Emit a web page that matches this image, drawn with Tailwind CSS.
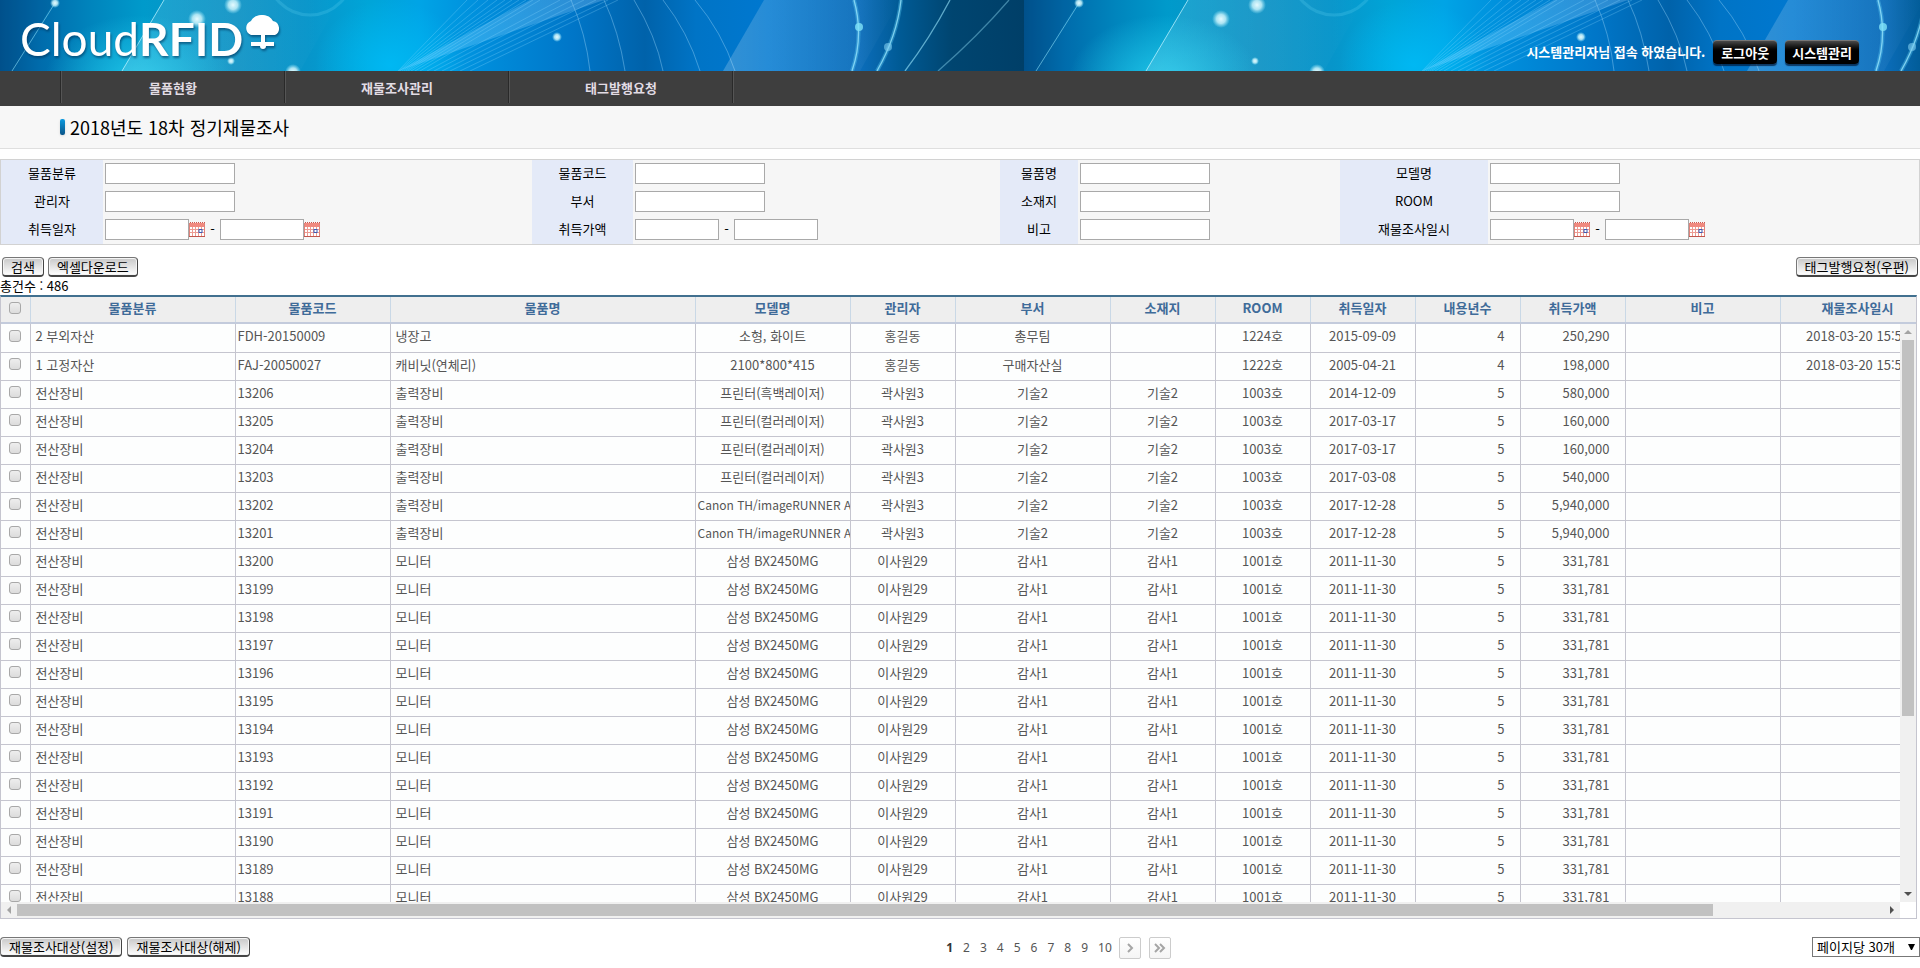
<!DOCTYPE html>
<html lang="ko">
<head>
  <meta charset="UTF-8">
  <meta name="viewport" content="width=device-width, initial-scale=1.0">
  <title>CloudRFID - 정기재물조사</title>
  <script src="https://cdn.jsdelivr.net/npm/@tailwindcss/browser@4"></script>
</head>
<body class="bg-white font-['Noto_Sans_CJK_KR',sans-serif] text-[13px] leading-[18px] text-black overflow-x-hidden">

  <!-- Header -->
  <header class="relative h-[71px] overflow-hidden bg-[#0078c8]">
    <svg class="absolute inset-0 w-full h-full" aria-hidden="true">
      <defs>
        <linearGradient id="sky" x1="0" x2="1">
          <stop offset="0" stop-color="#00538f"/>
          <stop offset="0.04" stop-color="#006cac"/>
          <stop offset="0.09" stop-color="#0085bd"/>
          <stop offset="0.14" stop-color="#009acb"/>
          <stop offset="0.23" stop-color="#0f93c5"/>
          <stop offset="0.3" stop-color="#0795ca"/>
          <stop offset="0.36" stop-color="#00a5d8"/>
          <stop offset="0.41" stop-color="#00a4e6"/>
          <stop offset="0.47" stop-color="#008edc"/>
          <stop offset="0.56" stop-color="#0076c8"/>
          <stop offset="0.63" stop-color="#0062aa"/>
          <stop offset="0.68" stop-color="#0074c6"/>
          <stop offset="0.75" stop-color="#0078d0"/>
          <stop offset="0.84" stop-color="#0b6dba"/>
          <stop offset="0.88" stop-color="#005a94"/>
          <stop offset="0.93" stop-color="#004570"/>
          <stop offset="1" stop-color="#003f68"/>
        </linearGradient>
        <radialGradient id="glow">
          <stop offset="0" stop-color="#22c8ea" stop-opacity="0.9"/>
          <stop offset="1" stop-color="#22c8ea" stop-opacity="0"/>
        </radialGradient>
        <radialGradient id="glowBlue">
          <stop offset="0" stop-color="#00baf5" stop-opacity="0.9"/>
          <stop offset="1" stop-color="#00baf5" stop-opacity="0"/>
        </radialGradient>
        <radialGradient id="dot">
          <stop offset="0" stop-color="#e6fbff"/>
          <stop offset="0.5" stop-color="#c6f1fa" stop-opacity="0.85"/>
          <stop offset="1" stop-color="#9be6f8" stop-opacity="0"/>
        </radialGradient>
        <linearGradient id="sheetLeft" x1="0" x2="1">
          <stop offset="0" stop-color="#fff" stop-opacity="0.12"/>
          <stop offset="1" stop-color="#fff" stop-opacity="0"/>
        </linearGradient>
        <linearGradient id="sheet" x1="0" x2="1">
          <stop offset="0" stop-color="#fff" stop-opacity="0.2"/>
          <stop offset="1" stop-color="#fff" stop-opacity="0"/>
        </linearGradient>
        <linearGradient id="beam" x1="0" y1="1" x2="1" y2="0">
          <stop offset="0" stop-color="#48c8ff" stop-opacity="0.5"/>
          <stop offset="1" stop-color="#7cb8ec" stop-opacity="0.35"/>
        </linearGradient>
        <pattern id="banner" width="1024" height="71" patternUnits="userSpaceOnUse">
          <rect width="1024" height="71" fill="url(#sky)"/>
          <ellipse cx="140" cy="80" rx="95" ry="65" fill="url(#glow)"/>
          <ellipse cx="390" cy="65" rx="75" ry="65" fill="url(#glowBlue)"/>
          <path d="M0 0H55L12 71H0Z" fill="#00457f" fill-opacity="0.2"/>
          <path d="M164 0H340L300 71H122Z" fill="url(#sheetLeft)"/>
          <circle cx="310" cy="-28" r="43" fill="none" stroke="#5cd0f0" stroke-opacity="0.25" stroke-width="3"/>
          <path d="M55 3L12 71" stroke="#8bdcf5" stroke-opacity="0.6" fill="none"/>
          <path d="M164 0L122 71" stroke="#bdf2ff" stroke-opacity="0.75" fill="none"/>
          <path d="M398 71L530 0H604Z" fill="url(#beam)"/>
          <path d="M398 71L467 0M399 71L478 0M400 71L488 0M402 71L497 0M404 71L505 0M406 71L512 0M408 71L519 0M411 71L526 0M415 71L533 0M420 71L540 0M427 71L560 0M434 71L572 0M442 71L584 0M450 71L596 0M460 71L608 0M470 71L618 0" stroke="#8fdcff" stroke-opacity="0.35" stroke-width="0.8" fill="none"/>
          <g fill="none" stroke="#8ccdf5" stroke-opacity="0.45">
            <path d="M571 0Q586 34 590 71"/>
            <path d="M604 0Q619 32 625 71"/>
            <path d="M634 0Q656 36 663 71"/>
            <path d="M663 0Q688 32 700 71"/>
            <path d="M695 0Q722 32 735 71"/>
          </g>
          <path d="M764 0H900L860 71H723Z" fill="url(#sheet)"/>
          <g fill="none" stroke="#5ccdf5" stroke-opacity="0.35" stroke-width="4">
            <path d="M854 0Q864 36 852 71"/>
            <path d="M901 0Q897 36 877 71"/>
          </g>
          <g fill="none" stroke="#9ce9ff" stroke-opacity="0.75" stroke-width="1.3">
            <path d="M854 0Q864 36 852 71"/>
            <path d="M901 0Q897 36 877 71"/>
            <path d="M950 0Q930 38 905 71" stroke-opacity="0.6"/>
            <path d="M1009 0Q978 36 938 71" stroke-opacity="0.4"/>
          </g>
          <circle cx="55" cy="3" r="5" fill="url(#dot)"/>
          <circle cx="233" cy="5" r="9" fill="url(#dot)"/>
          <circle cx="197" cy="19" r="9" fill="url(#dot)"/>
          <circle cx="231" cy="61" r="4" fill="url(#dot)"/>
          <circle cx="293" cy="72" r="8" fill="url(#dot)"/>
          <circle cx="557" cy="37" r="5" fill="url(#dot)"/>
          <circle cx="859" cy="27" r="4" fill="#7fe2f8" fill-opacity="0.8"/>
          <circle cx="888" cy="47" r="4" fill="#7fcdf0" fill-opacity="0.6"/>
        </pattern>
      </defs>
      <rect width="100%" height="71" fill="url(#banner)"/>
    </svg>
    <div class="relative flex h-full items-start justify-between">
      <a href="#" class="flex items-start pl-5 pt-3 text-white drop-shadow-[1px_2px_1px_rgba(0,50,90,0.6)]">
        <span class="font-['Lato',sans-serif] text-[46px] leading-[54px] font-normal">Cloud<span class="font-bold">RFID</span></span>
        <svg class="mt-[3px] w-10 h-[34px]" viewBox="0 0 40 34" fill="#fff" aria-hidden="true">
          <path d="M8 20A7.500 7.500 0 0 1 8 6A12 10 0 0 1 30 6A7.500 7.500 0 0 1 32 20Z"/>
          <circle cx="19" cy="9" r="9"/>
          <path d="M18 19H22V27H31V31H23A3 3 0 0 1 17 31H8V27H18Z"/>
        </svg>
      </a>
      <div class="flex items-center gap-2 pr-[61px] pt-10 font-bold text-white">
        <span>시스템관리자님 접속 하였습니다.</span>
        <button type="button" class="h-6 rounded-[4px] border-t border-[#777] bg-linear-to-b from-[#4a4a4a] from-0% via-black via-50% to-black px-2 leading-[22px] shadow-[0_2px_1px_rgba(0,20,50,0.7)]">로그아웃</button>
        <button type="button" class="h-6 rounded-[4px] border-t border-[#777] bg-linear-to-b from-[#4a4a4a] from-0% via-black via-50% to-black px-[7px] leading-[22px] shadow-[0_2px_1px_rgba(0,20,50,0.7)]">시스템관리</button>
      </div>
    </div>
  </header>

  <!-- Menu -->
  <nav class="h-[35px] bg-[#3e3e3e] pl-[60px]">
    <ul class="flex h-8 border-l border-[#292929] text-center font-bold leading-[34px] text-[#e2dce4]">
      <li class="w-[224px] border-r border-l border-l-[#555] border-r-[#292929]"><a href="#" class="block">물품현황</a></li>
      <li class="w-[224px] border-r border-l border-l-[#555] border-r-[#292929]"><a href="#" class="block">재물조사관리</a></li>
      <li class="w-[224px] border-r border-l border-l-[#555] border-r-[#292929]"><a href="#" class="block">태그발행요청</a></li>
      <li class="border-l border-[#555]"></li>
    </ul>
  </nav>

  <!-- Title -->
  <div class="flex h-[43px] items-center gap-[5px] border-b border-[#dfdfdf] bg-[#f7f7f7] pl-[60px]">
    <span class="h-4 w-[5px] rounded-[2px] bg-linear-to-b from-[#0a9ae0] to-[#0a5488] shadow"></span>
    <h1 class="text-[18px] leading-6">2018년도 18차 정기재물조사</h1>
  </div>

  <!-- Search conditions -->
  <form class="mt-[10px] border border-[#d2d2d2] bg-[#f6f6f6]">
    <div class="grid grid-cols-[102fr_429fr_101fr_367fr_78fr_262fr_148fr_431fr] auto-rows-[28px] text-center leading-[26px]">
      <label for="cls" class="bg-[#e4eaf8]">물품분류</label>
      <div class="flex items-center pb-[2px] pl-[2px]"><input id="cls" type="text" class="h-[21px] w-[130px] border border-[#a9a9a9] bg-white px-1"></div>
      <label for="code" class="bg-[#e4eaf8]">물품코드</label>
      <div class="flex items-center pb-[2px] pl-[2px]"><input id="code" type="text" class="h-[21px] w-[130px] border border-[#a9a9a9] bg-white px-1"></div>
      <label for="item" class="bg-[#e4eaf8]">물품명</label>
      <div class="flex items-center pb-[2px] pl-[2px]"><input id="item" type="text" class="h-[21px] w-[130px] border border-[#a9a9a9] bg-white px-1"></div>
      <label for="model" class="bg-[#e4eaf8]">모델명</label>
      <div class="flex items-center pb-[2px] pl-[2px]"><input id="model" type="text" class="h-[21px] w-[130px] border border-[#a9a9a9] bg-white px-1"></div>

      <label for="manager" class="bg-[#e4eaf8]">관리자</label>
      <div class="flex items-center pb-[2px] pl-[2px]"><input id="manager" type="text" class="h-[21px] w-[130px] border border-[#a9a9a9] bg-white px-1"></div>
      <label for="dept" class="bg-[#e4eaf8]">부서</label>
      <div class="flex items-center pb-[2px] pl-[2px]"><input id="dept" type="text" class="h-[21px] w-[130px] border border-[#a9a9a9] bg-white px-1"></div>
      <label for="place" class="bg-[#e4eaf8]">소재지</label>
      <div class="flex items-center pb-[2px] pl-[2px]"><input id="place" type="text" class="h-[21px] w-[130px] border border-[#a9a9a9] bg-white px-1"></div>
      <label for="room" class="bg-[#e4eaf8]">ROOM</label>
      <div class="flex items-center pb-[2px] pl-[2px]"><input id="room" type="text" class="h-[21px] w-[130px] border border-[#a9a9a9] bg-white px-1"></div>

      <label for="acqFrom" class="bg-[#e4eaf8]">취득일자</label>
      <div class="flex items-center pb-[2px] pl-[2px]">
        <input id="acqFrom" type="text" class="h-[21px] w-[84px] border border-[#a9a9a9] bg-white px-1">
        <button type="button" aria-label="시작일 선택" class="h-[21px]"><svg class="block h-[15px] w-4"><use href="#cal"/></svg></button>
        <span class="w-[15px]">-</span>
        <input aria-label="취득일자 종료" type="text" class="h-[21px] w-[84px] border border-[#a9a9a9] bg-white px-1">
        <button type="button" aria-label="종료일 선택" class="h-[21px]"><svg class="block h-[15px] w-4"><use href="#cal"/></svg></button>
      </div>
      <label for="price" class="bg-[#e4eaf8]">취득가액</label>
      <div class="flex items-center pb-[2px] pl-[2px]">
        <input id="price" type="text" class="h-[21px] w-[84px] border border-[#a9a9a9] bg-white px-1">
        <span class="w-[15px]">-</span>
        <input aria-label="취득가액 상한" type="text" class="h-[21px] w-[84px] border border-[#a9a9a9] bg-white px-1">
      </div>
      <label for="note" class="bg-[#e4eaf8]">비고</label>
      <div class="flex items-center pb-[2px] pl-[2px]"><input id="note" type="text" class="h-[21px] w-[130px] border border-[#a9a9a9] bg-white px-1"></div>
      <label for="chkFrom" class="bg-[#e4eaf8]">재물조사일시</label>
      <div class="flex items-center pb-[2px] pl-[2px]">
        <input id="chkFrom" type="text" class="h-[21px] w-[84px] border border-[#a9a9a9] bg-white px-1">
        <button type="button" aria-label="시작일 선택" class="h-[21px]"><svg class="block h-[15px] w-4"><use href="#cal"/></svg></button>
        <span class="w-[15px]">-</span>
        <input aria-label="재물조사일시 종료" type="text" class="h-[21px] w-[84px] border border-[#a9a9a9] bg-white px-1">
        <button type="button" aria-label="종료일 선택" class="h-[21px]"><svg class="block h-[15px] w-4"><use href="#cal"/></svg></button>
      </div>
    </div>
  </form>

  <!-- Buttons -->
  <div class="mt-3 flex gap-1 px-[2px]">
    <button type="button" class="h-5 rounded-[4px] border border-[#777] border-r-[#444] border-b-2 border-b-[#444] bg-linear-to-b from-[#c8c8c8] to-white px-2 leading-4 shadow-[inset_0_0_0_1px_#f4f4f4]">검색</button>
    <button type="button" class="h-5 rounded-[4px] border border-[#777] border-r-[#444] border-b-2 border-b-[#444] bg-linear-to-b from-[#c8c8c8] to-white px-2 leading-4 shadow-[inset_0_0_0_1px_#f4f4f4]">엑셀다운로드</button>
    <button type="button" class="ml-auto h-5 rounded-[4px] border border-[#777] border-r-[#444] border-b-2 border-b-[#444] bg-linear-to-b from-[#c8c8c8] to-white px-2 leading-4 shadow-[inset_0_0_0_1px_#f4f4f4]">태그발행요청(우편)</button>
  </div>
  <p>총건수 : 486</p>

  <!-- Grid -->
  <div class="mr-[3px] border border-t-2 border-[#c5c5cf] border-t-[#41708f]">
    <div class="overflow-hidden border-b-2 border-[#c3cbdc] bg-[#eeeeee]">
      <table class="w-[1934px] table-fixed border-collapse text-[#3f6b99]">
        <colgroup>
          <col class="w-[29px]"><col class="w-[205px]"><col class="w-[155px]"><col class="w-[305px]"><col class="w-[155px]"><col class="w-[105px]"><col class="w-[155px]"><col class="w-[105px]"><col class="w-[95px]"><col class="w-[105px]"><col class="w-[105px]"><col class="w-[105px]"><col class="w-[155px]"><col class="w-[155px]">
        </colgroup>
        <thead>
          <tr id="head" class="h-[25px]">
            <th class="border-r border-[#c9d8e6] pb-[3px]"><input type="checkbox" aria-label="전체 선택" class="mx-auto block size-3 appearance-none rounded-[3px] border border-[#a8a8a8] bg-linear-to-b from-[#eee] to-[#dcdcdc]"></th>
          </tr>
        </thead>
      </table>
    </div>
    <div class="grid grid-cols-[1fr_16px]">
      <div class="h-[578px] overflow-hidden bg-[#fdfefe]">
        <table class="w-[1934px] table-fixed border-collapse text-[#555]">
          <colgroup>
            <col class="w-[29px]"><col class="w-[205px]"><col class="w-[155px]"><col class="w-[305px]"><col class="w-[155px]"><col class="w-[105px]"><col class="w-[155px]"><col class="w-[105px]"><col class="w-[95px]"><col class="w-[105px]"><col class="w-[105px]"><col class="w-[105px]"><col class="w-[155px]"><col class="w-[155px]">
          </colgroup>
          <tbody id="rows"></tbody>
        </table>
      </div>
      <!-- Vertical scrollbar -->
      <div class="flex flex-col items-center bg-[#f0f0f0]">
        <svg class="h-4 w-4 shrink-0" fill="#a3a3a3"><path d="M4 10L8 6L12 10Z"/></svg>
        <div class="h-[65%] w-3 bg-[#c1c1c1]"></div>
        <svg class="mt-auto h-4 w-4 shrink-0" fill="#505050"><path d="M4 6L8 10L12 6Z"/></svg>
      </div>
      <!-- Horizontal scrollbar -->
      <div class="flex h-4 items-center bg-[#f0f0f0]">
        <svg class="h-4 w-4 shrink-0" fill="#a3a3a3"><path d="M10 4L6 8L10 12Z"/></svg>
        <div class="h-3 w-[1696px] bg-[#c1c1c1]"></div>
        <svg class="ml-auto h-4 w-4 shrink-0" fill="#505050"><path d="M6 4L10 8L6 12Z"/></svg>
      </div>
    </div>
  </div>

  <!-- Footer -->
  <div class="mt-[18px] grid grid-cols-[1fr_auto_1fr] items-start">
    <div class="flex gap-[5px]">
      <button type="button" class="h-5 rounded-[4px] border border-[#777] border-r-[#444] border-b-2 border-b-[#444] bg-linear-to-b from-[#c8c8c8] to-white px-2 leading-4 shadow-[inset_0_0_0_1px_#f4f4f4]">재물조사대상(설정)</button>
      <button type="button" class="h-5 rounded-[4px] border border-[#777] border-r-[#444] border-b-2 border-b-[#444] bg-linear-to-b from-[#c8c8c8] to-white px-2 leading-4 shadow-[inset_0_0_0_1px_#f4f4f4]">재물조사대상(해제)</button>
    </div>
    <div class="flex items-center pl-48 font-['Noto_Sans',sans-serif] text-[12px] leading-[22px] text-[#555]">
      <a href="#" class="px-[5px] font-bold text-[#333]">1</a>
      <a href="#" class="px-[5px]">2</a>
      <a href="#" class="px-[5px]">3</a>
      <a href="#" class="px-[5px]">4</a>
      <a href="#" class="px-[5px]">5</a>
      <a href="#" class="px-[5px]">6</a>
      <a href="#" class="px-[5px]">7</a>
      <a href="#" class="px-[5px]">8</a>
      <a href="#" class="px-[5px]">9</a>
      <a href="#" class="px-[5px]">10</a>
      <a href="#" aria-label="다음" class="ml-[2px] flex size-[22px] items-center justify-center rounded-[2px] border border-[#ccc] bg-linear-to-b from-white to-[#f5f5f5]">
        <svg class="size-3" fill="none" stroke="#a5a5a5" stroke-width="2"><path d="M4 2L8 6L4 10"/></svg>
      </a>
      <a href="#" aria-label="마지막" class="ml-2 flex size-[22px] items-center justify-center rounded-[2px] border border-[#ccc] bg-linear-to-b from-white to-[#f5f5f5]">
        <svg class="size-3" fill="none" stroke="#a5a5a5" stroke-width="2"><path d="M1 2L5 6L1 10M6 2L10 6L6 10"/></svg>
      </a>
    </div>
    <div class="relative justify-self-end">
      <select aria-label="페이지당 건수" class="block h-5 w-[108px] appearance-none border border-[#777] bg-white pl-1 leading-[18px]">
        <option>페이지당 30개</option>
        <option>페이지당 50개</option>
        <option>페이지당 100개</option>
      </select>
      <svg class="pointer-events-none absolute right-[5px] top-[7px] h-[6px] w-[7px]"><path d="M0 0H7L4 6H3Z"/></svg>
    </div>
  </div>

  <!-- Calendar icon -->
  <svg class="hidden">
    <symbol id="cal" viewBox="0 0 16 15">
      <rect x="0.500" y="1.500" width="15" height="13" fill="#fff" stroke="#e0837b"/>
      <rect x="1" y="1" width="14" height="4" fill="#f0897f"/>
      <path d="M1 0.500H16" stroke="#c9574f" stroke-dasharray="1 1"/>
      <path d="M1 7.500H15M1 10.500H15M3.500 5V14M6.500 5V14M9.500 5V14M12.500 5V14" stroke="#ec9b92"/>
      <path d="M0 14.500H16" stroke="#c0564e"/>
      <rect x="10" y="7.500" width="3" height="3" fill="#fff" stroke="#3b5bb5"/>
    </symbol>
  </svg>

  <script>
    const heads = ['물품분류', '물품코드', '물품명', '모델명', '관리자', '부서', '소재지', 'ROOM', '취득일자', '내용년수', '취득가액', '비고', '재물조사일시'];

    const data = [
      ['2 부외자산', 'FDH-20150009', '냉장고', '소형, 화이트', '홍길동', '총무팀', '', '1224호', '2015-09-09', '4', '250,290', '', '2018-03-20 15:53'],
      ['1 고정자산', 'FAJ-20050027', '캐비닛(연체리)', '2100*800*415', '홍길동', '구매자산실', '', '1222호', '2005-04-21', '4', '198,000', '', '2018-03-20 15:53'],
      ['전산장비', '13206', '출력장비', '프린터(흑백레이저)', '곽사원3', '기술2', '기술2', '1003호', '2014-12-09', '5', '580,000', '', ''],
      ['전산장비', '13205', '출력장비', '프린터(컬러레이저)', '곽사원3', '기술2', '기술2', '1003호', '2017-03-17', '5', '160,000', '', ''],
      ['전산장비', '13204', '출력장비', '프린터(컬러레이저)', '곽사원3', '기술2', '기술2', '1003호', '2017-03-17', '5', '160,000', '', ''],
      ['전산장비', '13203', '출력장비', '프린터(컬러레이저)', '곽사원3', '기술2', '기술2', '1003호', '2017-03-08', '5', '540,000', '', ''],
      ['전산장비', '13202', '출력장비', '<span class="text-[12px]">Canon TH/imageRUNNER A</span>', '곽사원3', '기술2', '기술2', '1003호', '2017-12-28', '5', '5,940,000', '', ''],
      ['전산장비', '13201', '출력장비', '<span class="text-[12px]">Canon TH/imageRUNNER A</span>', '곽사원3', '기술2', '기술2', '1003호', '2017-12-28', '5', '5,940,000', '', '']
    ];
    for (let code = 13200; code >= 13188; code--) {
      data.push(['전산장비', String(code), '모니터', '삼성 BX2450MG', '이사원29', '감사1', '감사1', '1001호', '2011-11-30', '5', '331,781', '', '']);
    }

    // Alignment of each column
    const align = ['text-left pl-[5px]', 'text-left pl-[2px]', 'text-left pl-[5px]', 'text-center px-[2px]', 'text-center', 'text-center', 'text-center', 'text-center', 'text-center', 'text-right pr-[15px]', 'text-right pr-[15px]', 'text-center', 'text-center'];

    document.getElementById('head').insertAdjacentHTML('beforeend',
      heads.map(h => `<th class="border-r border-[#c9d8e6] pb-[3px] font-bold">${h}</th>`).join(''));

    document.getElementById('rows').innerHTML = data.map(row => `
      <tr class="h-7">
        <td class="border-r border-b border-[#c5c5cf] pb-[4px]"><input type="checkbox" aria-label="${row[1]} 선택" class="mx-auto block size-3 appearance-none rounded-[3px] border border-[#a8a8a8] bg-linear-to-b from-[#eee] to-[#dcdcdc]"></td>
        ${row.map((v, i) => `<td class="overflow-hidden whitespace-nowrap border-r border-b border-[#c5c5cf] pb-[3px] ${align[i]}">${v}</td>`).join('')}
      </tr>`).join('');
  </script>
</body>
</html>
